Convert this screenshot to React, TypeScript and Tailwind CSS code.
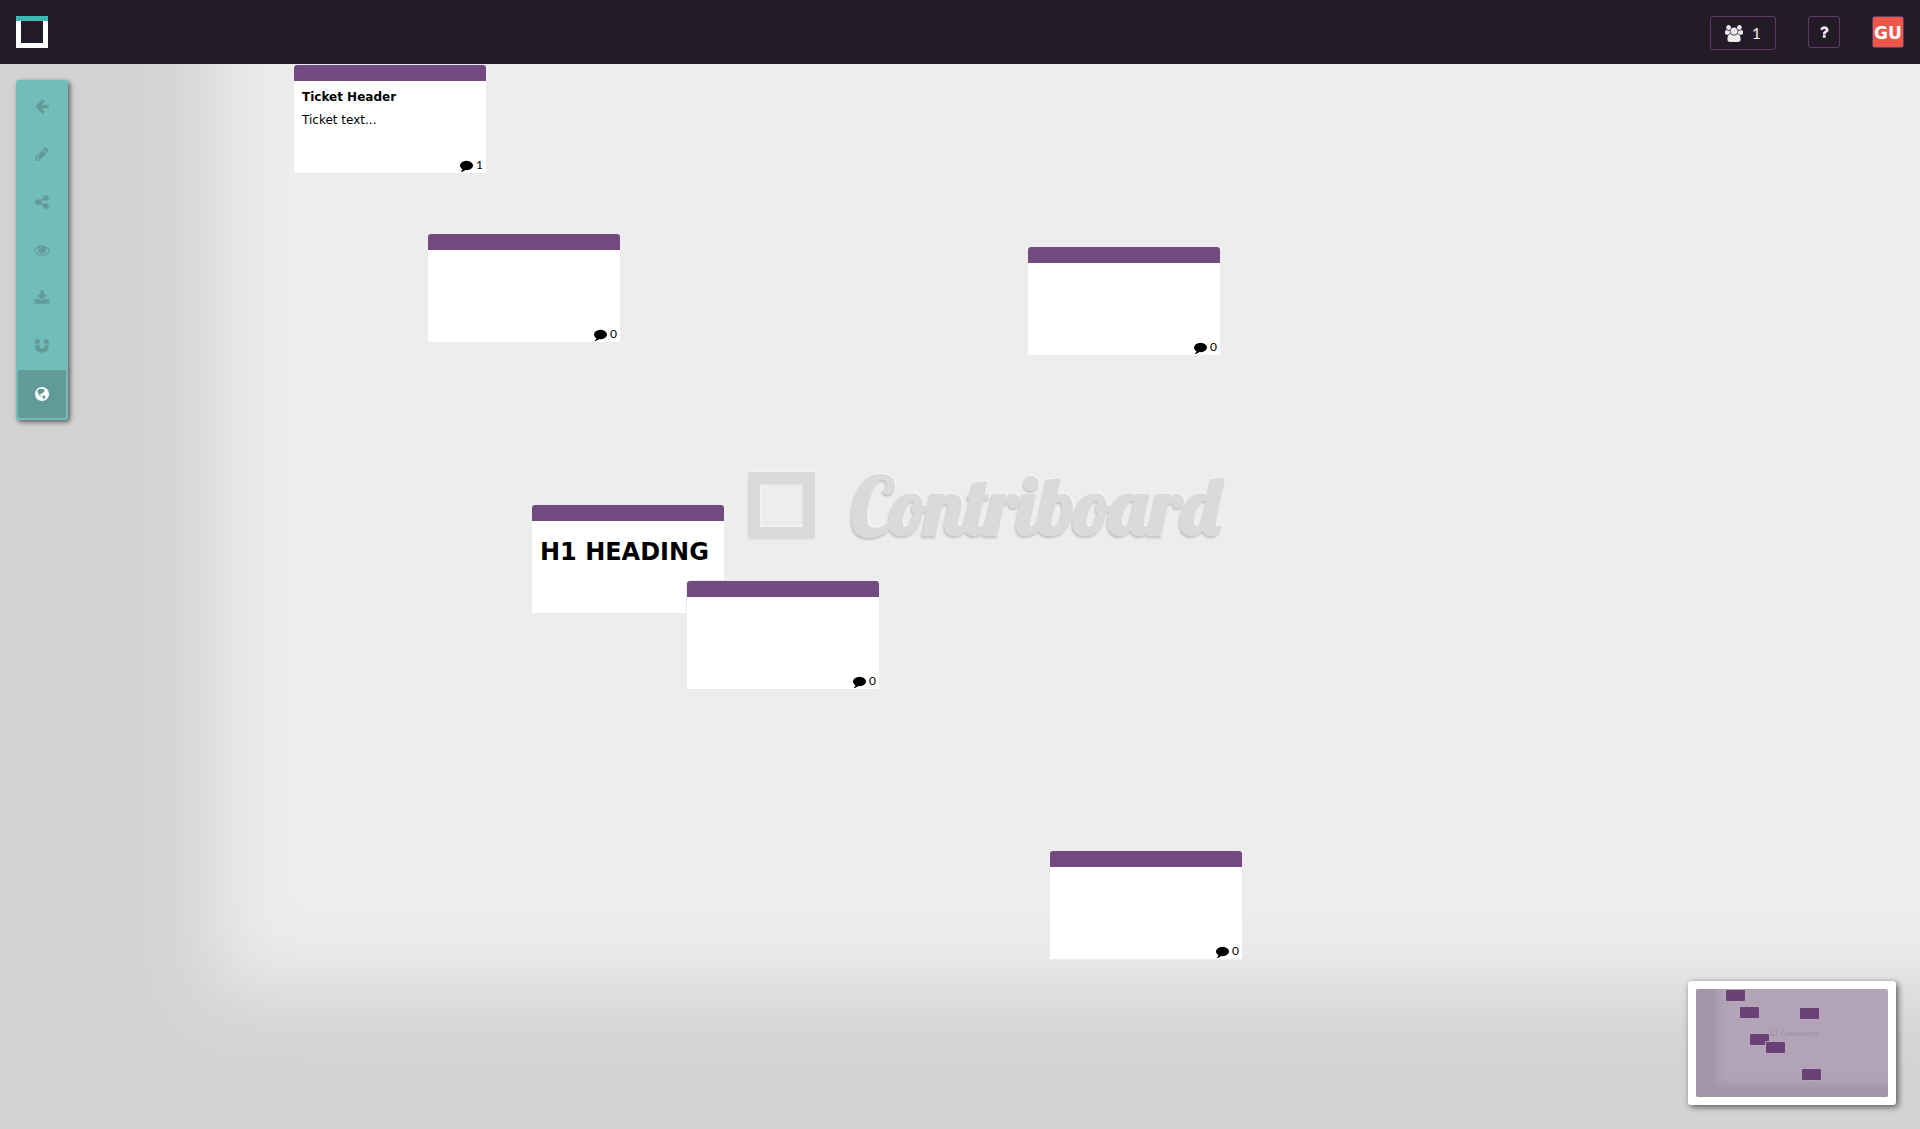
import type { ReactNode } from "react";

const ICONS = {
  back: "M1664 896v128q0 53-32.5 90.5t-84.5 37.5h-704l293 294q38 36 38 90t-38 90l-75 76q-37 37-90 37-52 0-91-37l-651-652q-37-37-37-90 0-52 37-91l651-650q38-38 91-38 52 0 90 38l75 74q38 38 38 91t-38 91l-293 293h704q52 0 84.5 37.5t32.5 90.5z",
  edit: "M491 1536l91-91-235-235-91 91v107h128v128h107zm523-928q0-22-22-22-10 0-17 7l-542 542q-7 7-7 17 0 22 22 22 10 0 17-7l542-542q7-7 7-17zm-54-192l416 416-832 832h-416v-416zm683 96q0 53-37 90l-166 166-416-416 166-165q36-38 90-38 53 0 91 38l235 234q37 39 37 91z",
  share: "M1344 1024q133 0 226.5 93.5t93.5 226.5-93.5 226.5-226.5 93.5-226.5-93.5-93.5-226.5q0-12 2-34l-360-180q-92 86-218 86-133 0-226.5-93.5t-93.5-226.5 93.5-226.5 226.5-93.5q126 0 218 86l360-180q-2-22-2-34 0-133 93.5-226.5t226.5-93.5 226.5 93.5 93.5 226.5-93.5 226.5-226.5 93.5q-126 0-218-86l-360 180q2 22 2 34t-2 34l360 180q92-86 218-86z",
  eye: "M1664 960q-152-236-381-353 61 104 61 225 0 185-131.5 316.5t-316.5 131.5-316.5-131.5-131.5-316.5q0-121 61-225-229 117-381 353 133 205 333.5 326.5t434.5 121.5 434.5-121.5 333.5-326.5zm-720-384q0-20-14-34t-34-14q-125 0-214.5 89.5t-89.5 214.5q0 20 14 34t34 14 34-14 14-34q0-86 61-147t147-61q20 0 34-14t14-34zm848 384q0 34-20 69-140 230-376.5 368.5t-499.5 138.5-499.5-139-376.5-368q-20-35-20-69t20-69q140-229 376.5-368t499.5-139 499.5 139 376.5 368q20 35 20 69z",
  download: "M1344 1344q0-26-19-45t-45-19-45 19-19 45 19 45 45 19 45-19 19-45zm256 0q0-26-19-45t-45-19-45 19-19 45 19 45 45 19 45-19 19-45zm128-224v320q0 40-28 68t-68 28h-1472q-40 0-68-28t-28-68v-320q0-40 28-68t68-28h465l135 136q58 56 136 56t136-56l136-136h464q40 0 68 28t28 68zm-325-569q17 41-14 70l-448 448q-18 19-45 19t-45-19l-448-448q-31-29-14-70 17-39 59-39h256v-448q0-26 19-45t45-19h256q26 0 45 19t19 45v448h256q42 0 59 39z",
  magnet: "M1664 832v128q0 201-98.5 362t-274 251.5-395.5 90.5-395.5-90.5-274-251.5-98.5-362v-128q0-26 19-45t45-19h384q26 0 45 19t19 45v128q0 52 23.5 90t53.5 57 71 30 64 13 44 2 44-2 64-13 71-30 53.5-57 23.5-90v-128q0-26 19-45t45-19h384q26 0 45 19t19 45zm-1024-640v384q0 26-19 45t-45 19h-384q-26 0-45-19t-19-45v-384q0-26 19-45t45-19h384q26 0 45 19t19 45zm1024 0v384q0 26-19 45t-45 19h-384q-26 0-45-19t-19-45v-384q0-26 19-45t45-19h384q26 0 45 19t19 45z",
  comment: "M1792 896q0 174-120 321.5t-326 233-450 85.5q-70 0-145-8-198 175-460 242-49 14-114 22-17 2-30.5-9t-17.5-29v-1q-3-4-.5-12t2-10 4.5-9.5l6-9 7-8.5 8-9q7-8 31-34.5t34.5-38 31-39.5 32.5-51 27-59 26-76q-157-89-247.5-220t-90.5-281q0-130 71-248.5t191-204.5 286-136.5 348-50.5q244 0 450 85.5t326 233 120 321.5z",
  question: "M1088 1256v240q0 16-12 28t-28 12h-240q-16 0-28-12t-12-28v-240q0-16 12-28t28-12h240q16 0 28 12t12 28zm316-600q0 54-15.5 101t-35 76.5-55 59.5-57.5 43.5-61 35.5q-41 23-68.5 65t-27.5 67q0 17-12 32.5t-28 15.5h-240q-15 0-25.5-18.5t-10.5-37.5v-45q0-83 65-156.5t143-108.5q59-27 84-56t25-76q0-42-46.5-74t-107.5-32q-65 0-108 29-35 25-107 115-13 16-31 16-12 0-25-8l-164-125q-13-10-15.5-25t5.5-28q160-266 464-266 80 0 161 31t146 83 106 127.5 41 158.5z",
  users: "M593 896q-162 5-265 128h-134q-82 0-138-40.5t-56-118.5q0-353 124-353 6 0 43.5 21t97.5 42.5 119 21.5q67 0 133-23-5 37-5 66 0 139 81 256zm1071 637q0 120-73 189.5t-194 69.5h-874q-121 0-194-69.5t-73-189.5q0-53 3.5-103.5t14-109 26.5-108.5 43-97.5 62-81 85.5-53.5 111.5-20q10 0 43 21.5t73 48 107 48 135 21.5 135-21.5 107-48 73-48 43-21.5q61 0 111.5 20t85.5 53.5 62 81 43 97.5 26.5 108.5 14 109 3.5 103.5zm-1024-1277q0 106-75 181t-181 75-181-75-75-181 75-181 181-75 181 75 75 181zm704 384q0 159-112.5 271.5t-271.5 112.5-271.5-112.5-112.5-271.5 112.5-271.5 271.5-112.5 271.5 112.5 112.5 271.5zm576 225q0 78-56 118.5t-138 40.5h-134q-103-123-265-128 81-117 81-256 0-29-5-66 66 23 133 23 59 0 119-21.5t97.5-42.5 43.5-21q124 0 124 353zm-128-609q0 106-75 181t-181 75-181-75-75-181 75-181 181-75 181 75 75 181z",
};

function Icon({ name, className = "size-4" }: { name: keyof typeof ICONS; className?: string }) {
  return (
    <svg viewBox={name === "users" ? "0 0 1920 1792" : "0 0 1792 1792"} className={className} fill="currentColor" aria-hidden="true">
      <path d={ICONS[name]} />
    </svg>
  );
}

function Globe() {
  return (
    <svg viewBox="0 0 14 14" className="size-[14px]" aria-hidden="true">
      <circle cx="7" cy="7" r="7" fill="#fff" />
      <path fill="#629a98" d="M2.6 3.2 4.2 2l1.6-.5.8.8 1.4-.6 1.5.7-.3 1 .8.6-1.2.5-.3 1-1.2.6-.9 1.1-.8-.3-.9.5.4.8 1 .5.3 1-.8-.1-1.500-1.500-.9-1.500L2.500 5ZM7.600 8.800l1.500-.3 1.500 1.100-.4 1.200-1.200 1.200-.8.2-.3-1.500-.7-.9Z" />
    </svg>
  );
}

const TOOLS: { label: string; icon: keyof typeof ICONS }[] = [
  { label: "Back", icon: "back" },
  { label: "Edit board", icon: "edit" },
  { label: "Share board", icon: "share" },
  { label: "Review", icon: "eye" },
  { label: "Export board", icon: "download" },
  { label: "Snap to grid", icon: "magnet" },
];

type Ticket = { x: number; y: number; comments?: number; body?: ReactNode };

// Ticket positions on the board canvas, in board pixels.
const TICKETS: Ticket[] = [
  {
    x: 294,
    y: 1,
    comments: 1,
    body: (
      <>
        <h2 className="text-xs leading-4 font-bold">Ticket Header</h2>
        <p className="mt-[7px] text-xs leading-4">Ticket text...</p>
      </>
    ),
  },
  { x: 428, y: 170, comments: 0 },
  { x: 1028, y: 183, comments: 0 },
  { x: 532, y: 441, body: <h1 className="pt-[7px] text-2xl leading-8 font-bold whitespace-nowrap">H1 HEADING</h1> },
  { x: 687, y: 517, comments: 0 },
  { x: 1050, y: 787, comments: 0 },
];

function TicketCard({ ticket }: { ticket: Ticket }) {
  return (
    <article
      className="absolute flex h-[108px] w-48 flex-col overflow-hidden rounded-t-[3px] bg-white text-black shadow-[0_0_0_1px_#ececec]"
      style={{ left: ticket.x, top: ticket.y }}
    >
      <div className="h-4 shrink-0 bg-[#724a7f]" />
      <div className="flex-1 px-2 pt-2">{ticket.body}</div>
      {ticket.comments !== undefined && (
        <div className="flex items-center justify-end gap-[3px] pr-[3px] font-[Lato,sans-serif] text-xs leading-4">
          <Icon name="comment" className="size-[13px]" />
          <span>{ticket.comments}</span>
        </div>
      )}
    </article>
  );
}

function Minimap() {
  return (
    <aside aria-label="Minimap" className="absolute right-6 bottom-6 rounded-[3px] bg-white p-2 shadow-[2px_2px_6px_rgba(0,0,0,0.6)]">
      <div className="relative h-[108px] w-48 overflow-hidden rounded-[2px] bg-[#b2a4b6] shadow-[inset_21px_-13px_8px_#a395a7]">
        <div className="absolute top-[40px] left-[75px] flex items-center gap-1 text-[#a496a8]">
          <span className="size-[6px] border border-current" />
          <span className="font-[Lobster,'Liberation_Serif',serif] text-[8px] leading-2">Contriboard</span>
        </div>
        {TICKETS.map((t) => (
          <span
            key={`${t.x}-${t.y}`}
            className="absolute h-[11px] w-[19px] rounded-[1px] bg-[#694174] shadow-[0_0_0_1px_#b9a5c0]"
            style={{ left: Math.round(t.x / 10) + 1, top: Math.round(t.y / 10) + 1 }}
          />
        ))}
      </div>
    </aside>
  );
}

export default function App() {
  return (
    <div className="flex min-h-screen flex-col bg-[#ededed] font-['DejaVu_Sans',sans-serif]">
      <header className="flex h-16 shrink-0 items-start justify-between bg-[#231b27] px-4 pt-4">
        <a href="#" aria-label="Contriboard home">
          <svg viewBox="0 0 32 32" className="size-8" aria-hidden="true">
            <path fill="#fff" d="M0 5h5v22h22V5h5v27H0Z" />
            <path fill="#3fb8b8" d="M0 0h32v5H0Z" />
          </svg>
        </a>
        <div className="flex items-start gap-8 text-[#ececec]">
          <button type="button" aria-label="1 member" className="flex h-[34px] w-[66px] items-center justify-center gap-[9px] rounded-[3px] border border-[#5b3a66] font-[Lato,sans-serif] text-base leading-5">
            <Icon name="users" className="h-[17px] w-[18px]" />
            <span>1</span>
          </button>
          <button type="button" aria-label="Help" className="flex size-8 items-center justify-center rounded-[3px] border border-[#5b3a66]">
            <Icon name="question" />
          </button>
          <button type="button" className="flex size-8 items-center justify-center rounded-[3px] border border-[#5b3a66] bg-[#eb584a] pt-px text-[17px] leading-6 font-bold text-white">
            GU
          </button>
        </div>
      </header>

      <main className="relative flex-1 overflow-hidden shadow-[inset_215px_-140px_78px_#d3d3d3]">
        <div className="absolute top-[399px] left-[749px] flex items-center gap-9 text-[#dadada]">
          <svg viewBox="0 0 66 66" className="size-[66px] [filter:drop-shadow(-1px_1px_1px_#d0d0d0)_drop-shadow(1px_-1px_1px_#f8f8f8)]" aria-hidden="true">
            <path fill="none" stroke="currentColor" strokeWidth="11" d="M5.500 5.500h55v55h-55Z" />
          </svg>
          <span className="font-[Lobster,'Liberation_Serif',serif] text-[80px] leading-[84px] font-bold [text-shadow:-1px_2px_2px_#c4c4c4,1px_-1px_1px_#f8f8f8]">
            Contriboard
          </span>
        </div>

        {TICKETS.map((t) => (
          <TicketCard key={`${t.x}-${t.y}`} ticket={t} />
        ))}

        <nav aria-label="Board tools" className="absolute top-4 left-4 flex w-[52px] flex-col rounded-[3px] bg-[#72bcba] p-[2px] shadow-[2px_2px_5px_rgba(0,0,0,0.6)]">
          {TOOLS.map((tool) => (
            <button key={tool.label} type="button" aria-label={tool.label} className="flex h-12 items-center justify-center rounded-[2px] text-[#629a98]">
              <Icon name={tool.icon} />
            </button>
          ))}
          <button type="button" aria-label="Toggle minimap" aria-pressed="true" className="flex h-12 items-center justify-center rounded-[2px] bg-[#629a98]">
            <Globe />
          </button>
        </nav>

        <Minimap />
      </main>
    </div>
  );
}
